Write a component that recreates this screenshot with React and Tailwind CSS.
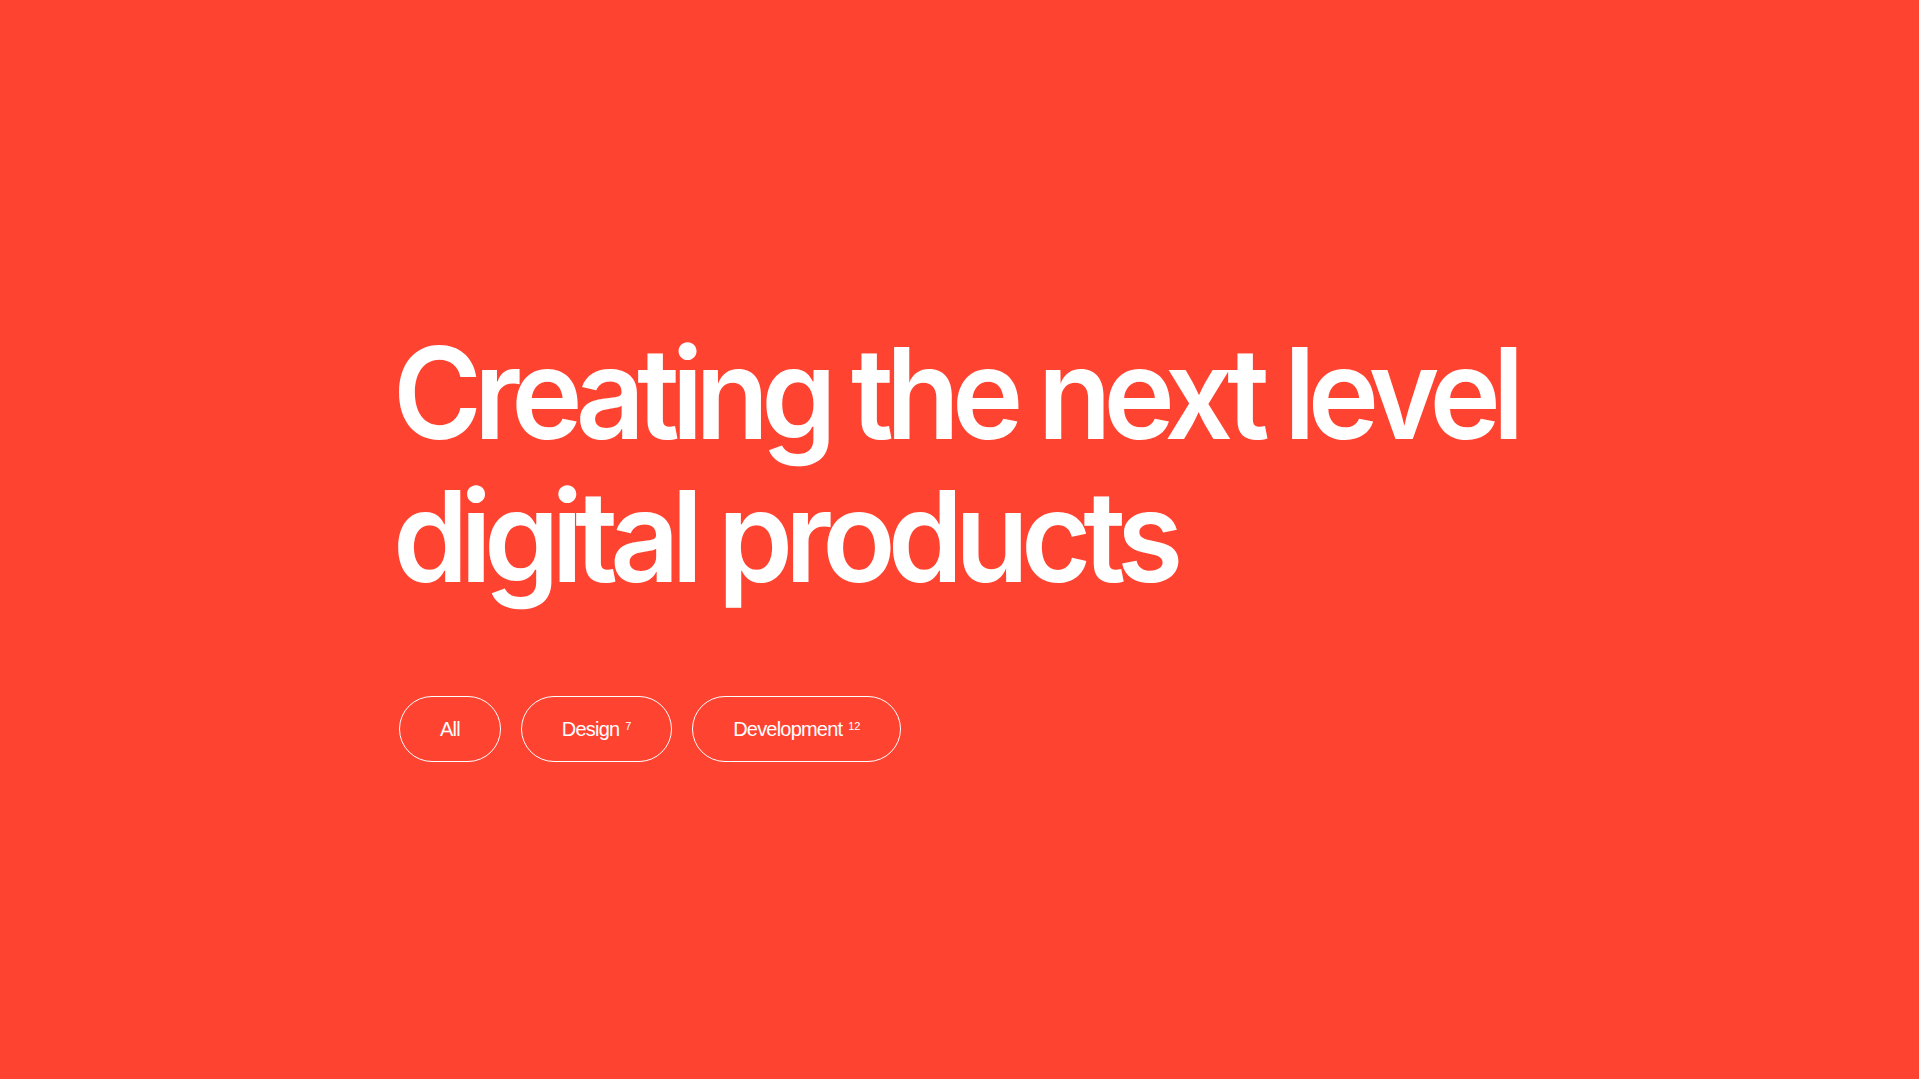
import React, { useState } from 'react';

const filters = [
  { label: 'All', count: null },
  { label: 'Design', count: 7 },
  { label: 'Development', count: 12 },
];

const App = () => {
  const [active, setActive] = useState('All');

  return (
    <div className="min-h-screen w-full bg-[#ff4331] text-white font-['Liberation_Sans',Arial,sans-serif]">
      <div className="pl-[399px] pr-[400px] pt-[322px]">
        {/* display face is a touch narrower than Inter, so squeeze it a little */}
        <h1 className="-ml-[6px] origin-left scale-x-[0.95] whitespace-nowrap font-['Inter',sans-serif] text-[127px] leading-[143px] tracking-[-0.066em] font-semibold">
          Creating the next level
          <br />
          digital products
        </h1>

        <div className="mt-[88px] flex items-center gap-5">
          {filters.map(f => (
            <button
              key={f.label}
              type="button"
              onClick={() => setActive(f.label)}
              className="h-[66px] px-10 rounded-full border border-white flex items-center text-[20px] tracking-[-0.04em] text-white"
            >
              <span>{f.label}</span>
              {f.count !== null && (
                <sup className="ml-[6px] text-[11px] tracking-[-0.02em] relative -top-[3px]">{f.count}</sup>
              )}
            </button>
          ))}
        </div>
      </div>
    </div>
  );
};

export default App;
